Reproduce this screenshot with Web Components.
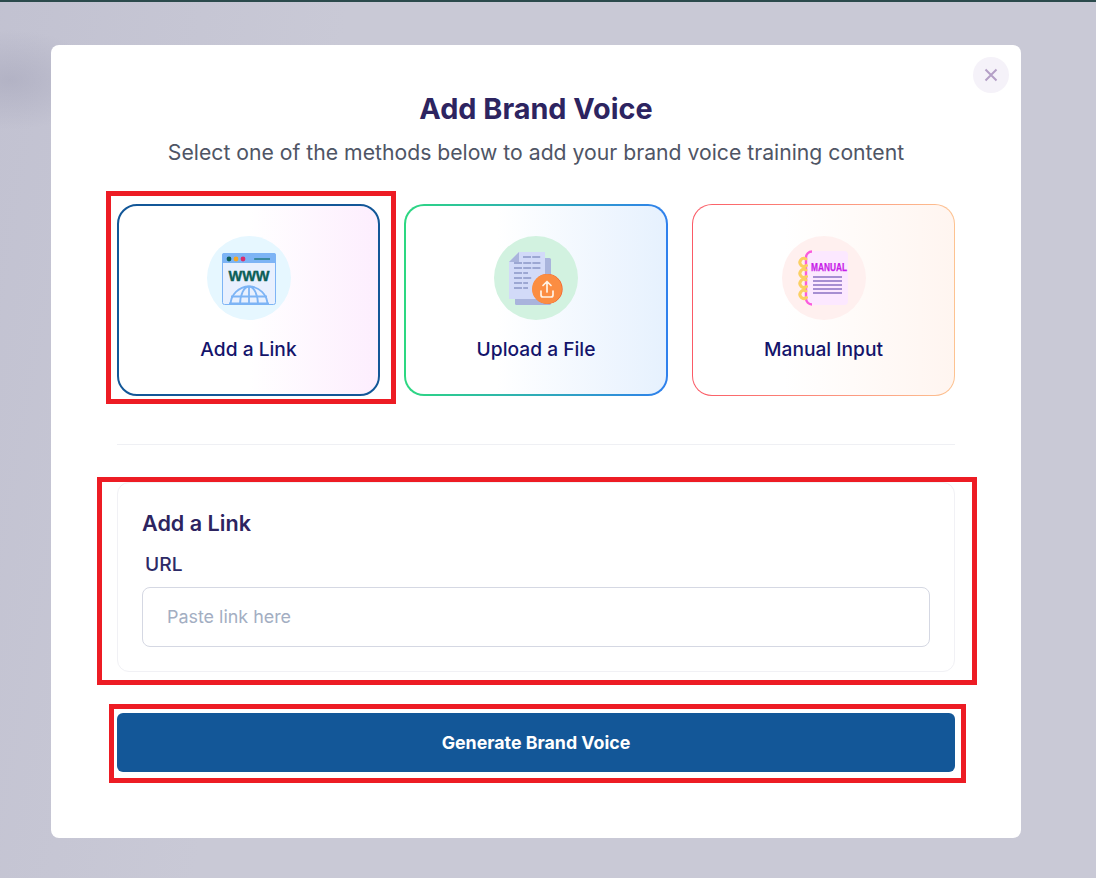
<!DOCTYPE html>
<html>
<head>
<meta charset="utf-8">
<title>Add Brand Voice</title>
<style>
  html, body { margin: 0; height: 100%; }
  body {
    height: 878px;
    overflow: hidden;
    font-family: Inter, "Liberation Sans", sans-serif;
    background-color: #c9c9d6;
  }
  svg { display: block; }
</style>
</head>
<body>
<voice-overlay>
  <voice-modal>
    <red-mark style="--t:-13px;--r:-16px;--b:-8px;--l:-11px">
      <method-card label="Add a Link" kind="link">
        <svg slot="icon" width="84" height="84" viewBox="0 0 84 84">
          <defs><clipPath id="win"><rect x="15" y="17" width="54" height="52" rx="2"/></clipPath></defs>
          <circle cx="42" cy="42" r="42" fill="#e6f7ff"/>
          <rect x="15.5" y="17.5" width="53" height="51" rx="2" fill="#e8f0fe" stroke="#7db4f5"/>
          <path d="M15 19a2 2 0 0 1 2-2h50a2 2 0 0 1 2 2v8H15z" fill="#7db4f5"/>
          <circle cx="22" cy="23" r="2.4" fill="#0f5f58"/>
          <circle cx="29" cy="23" r="2.4" fill="#f5a623"/>
          <circle cx="36" cy="23" r="2.4" fill="#d92d6b"/>
          <path d="M47 23h16" stroke="#0f6f66" stroke-width="1.2"/>
          <text x="42" y="44.500" text-anchor="middle" font-family="Liberation Sans" font-weight="700" font-size="14.500" textLength="41" stroke="#0b5e57" stroke-width=".4" fill="#0b5e57">WWW</text>
          <g clip-path="url(#win)" fill="none" stroke="#7db4f5" stroke-width="1.8">
            <circle cx="42" cy="69" r="18.500"/>
            <ellipse cx="42" cy="69" rx="9" ry="18.500"/>
            <path d="M42 50v20M24 60.500h36M22 67.500h40"/>
          </g>
        </svg>
      </method-card>
    </red-mark>
    <method-card label="Upload a File" kind="file">
      <svg slot="icon" width="84" height="84" viewBox="0 0 84 84">
        <circle cx="42" cy="42" r="42" fill="#d2f2e0"/>
        <rect x="21" y="22" width="36" height="47" rx="1.500" fill="#a9b4dc"/>
        <path d="M25 16h26v47H15V26z" fill="#d2daf8"/>
        <path d="M25 16v10H15z" fill="#a9b4dc"/>
        <g stroke="#8b96c6" stroke-width="1.300" stroke-dasharray="8 1.200">
          <path d="M29 21h18"/><path d="M20 27h27"/><path d="M20 32h27"/>
          <path d="M20 37h14"/><path d="M20 42h18"/><path d="M20 47h14"/><path d="M20 52h14"/>
        </g>
        <circle cx="53.600" cy="53" r="15" fill="#f4511e"/>
        <circle cx="53" cy="53" r="15" fill="#fb8d42"/>
        <path d="M53 56v-10M49 49.500L53 45.500l4 4M47 55v4a2 2 0 0 0 2 2h8a2 2 0 0 0 2-2v-4" fill="none" stroke="#fff3e6" stroke-width="1.700" stroke-linecap="round" stroke-linejoin="round"/>
      </svg>
    </method-card>
    <method-card label="Manual Input" kind="manual">
      <svg slot="icon" width="84" height="84" viewBox="0 0 84 84">
        <circle cx="42" cy="42" r="42" fill="#fff0ef"/>
        <path d="M30 15h32a4 4 0 0 1 4 4v46a4 4 0 0 1-4 4H30a6 6 0 0 1-6-6V21a6 6 0 0 1 6-6z" fill="#fce8ff"/>
        <path d="M30 15.500a6 6 0 0 0-6 6v41a6 6 0 0 0 6 6" fill="none" stroke="#fb5bdc" stroke-width="2.400"/>
        <g fill="none" stroke="#fbd063" stroke-width="3" stroke-linecap="round">
          <path d="M24 23a4 4 0 1 0 .5 6.500"/>
          <path d="M24 34a4 4 0 1 0 .5 6.500"/>
          <path d="M24 44a4 4 0 1 0 .5 6.500"/>
          <path d="M24 55a4 4 0 1 0 .5 6.500"/>
        </g>
        <text x="47" y="35" text-anchor="middle" font-family="Liberation Sans" font-weight="700" font-size="10" textLength="36" lengthAdjust="spacingAndGlyphs" stroke="#c81ee8" stroke-width=".25" fill="#c81ee8">MANUAL</text>
        <path d="M31 41h29M31 45h29M31 49h29M31 53h29M31 57h29" stroke="#8a70c4" stroke-width="1.300"/>
      </svg>
    </method-card>
  </voice-modal>
</voice-overlay>

<template id="overlay-tpl">
  <style>
    :host {
      display: block;
      height: 878px;
      box-sizing: border-box;
      border-top: 2px solid #2b4a4c;
      padding: 43px 75px 40px 51px;
      background:
        radial-gradient(90px 50px at 10px 78px, rgba(168,168,188,.6), rgba(168,168,188,0)),
        linear-gradient(100deg, rgba(185,185,203,.45), rgba(201,201,214,0) 28%),
        #c9c9d6;
    }
  </style>
  <slot></slot>
</template>

<template id="modal-tpl">
  <style>
    :host {
      display: block;
      position: relative;
      height: 793px;
      box-sizing: border-box;
      padding: 47px 66px 0;
      background: #fff;
      border-radius: 8px;
    }
    .close {
      position: absolute;
      top: 12px;
      right: 12px;
      width: 36px;
      height: 36px;
      display: flex;
      align-items: center;
      justify-content: center;
      border-radius: 50%;
      background: #f5f2f9;
    }
    h1 {
      margin: 0;
      text-align: center;
      font-size: 28.800px;
      line-height: 34px;
      font-weight: 700;
      color: #2d2460;
    }
    p {
      margin: 14px 0 0;
      text-align: center;
      font-size: 21.200px;
      line-height: 24px;
      color: #4f5565;
    }
    .methods {
      display: grid;
      grid-template-columns: 263px 264px 263px;
      gap: 24px;
      margin-top: 40px;
      height: 192px;
    }
    hr {
      height: 1px;
      border: 0;
      margin: 48px 0 0;
      background: #eff0f4;
    }
  </style>
  <div class="close">
    <svg width="14" height="14" viewBox="0 0 14 14"><path d="M1.500 1.500l11 11M12.500 1.500l-11 11" stroke="#b49fc6" stroke-width="2"/></svg>
  </div>
  <h1>Add Brand Voice</h1>
  <p>Select one of the methods below to add your brand voice training content</p>
  <div class="methods"><slot></slot></div>
  <hr>
  <red-mark style="--t:-5px;--r:-22px;--b:-13px;--l:-20px;margin-top:37px">
    <link-panel></link-panel>
  </red-mark>
  <red-mark style="--t:-9px;--r:-11px;--b:-11px;--l:-8px;margin-top:41px">
    <primary-button>Generate Brand Voice</primary-button>
  </red-mark>
</template>

<template id="mark-tpl">
  <style>
    :host { display: block; position: relative; }
    .box {
      position: absolute;
      top: var(--t);
      right: var(--r);
      bottom: var(--b);
      left: var(--l);
      border: 5px solid #ed1c24;
      pointer-events: none;
    }
  </style>
  <slot></slot>
  <div class="box"></div>
</template>

<template id="card-tpl">
  <style>
    :host {
      display: flex;
      flex-direction: column;
      align-items: center;
      height: 192px;
      box-sizing: border-box;
      padding-top: 30px;
      border: 2px solid transparent;
      border-radius: 20px;
      font-size: 19.200px;
      line-height: 22px;
      font-weight: 500;
      color: #14146b;
    }
    :host([kind="link"]) {
      border-color: #135798;
      background: linear-gradient(90deg, #fff 50%, #fdeefe) padding-box;
    }
    :host([kind="file"]) {
      background:
        linear-gradient(90deg, #fff 35%, #e6f1fe) padding-box,
        linear-gradient(90deg, #2dd881, #2f80ed) border-box;
    }
    :host([kind="manual"]) {
      border-width: 1px;
      padding-top: 31px;
      background:
        linear-gradient(90deg, #fff 35%, #fff5f0) padding-box,
        linear-gradient(90deg, #fb5a66, #fdc391) border-box;
    }
    .label { margin-top: 18px; }
  </style>
  <slot name="icon"></slot>
  <div class="label"></div>
</template>

<template id="panel-tpl">
  <style>
    :host {
      display: block;
      height: 190px;
      box-sizing: border-box;
      padding: 28px 24px 0;
      border: 1px solid #f1f1f5;
      border-radius: 12px;
    }
    h2 {
      margin: 0;
      font-size: 21.600px;
      line-height: 24px;
      font-weight: 600;
      color: #2d2460;
    }
    label {
      display: block;
      margin: 18px 0 0 3px;
      font-size: 19.200px;
      line-height: 22px;
      font-weight: 500;
      color: #2d2a66;
    }
    input {
      display: block;
      width: 100%;
      height: 60px;
      box-sizing: border-box;
      margin-top: 12px;
      padding: 0 24px 2px;
      border: 1px solid #d5d8e3;
      border-radius: 8px;
      outline: 0;
      font: 400 17.900px Inter, "Liberation Sans", sans-serif;
      background: #fff;
    }
    input::placeholder { color: #a3aec2; opacity: 1; }
  </style>
  <h2>Add a Link</h2>
  <label for="url">URL</label>
  <input id="url" type="text" placeholder="Paste link here">
</template>

<template id="button-tpl">
  <style>
    :host {
      display: flex;
      align-items: center;
      justify-content: center;
      height: 59px;
      border-radius: 6px;
      background: #135798;
      color: #fff;
      font-size: 17.800px;
      font-weight: 700;
    }
  </style>
  <slot></slot>
</template>

<script>
  // every element here just stamps its template into an open shadow root
  const stamp = (el, id) => {
    el.attachShadow({ mode: 'open' });
    el.shadowRoot.appendChild(document.getElementById(id).content.cloneNode(true));
  };

  class VoiceOverlay extends HTMLElement {
    constructor() { super(); stamp(this, 'overlay-tpl'); }
  }
  class VoiceModal extends HTMLElement {
    constructor() { super(); stamp(this, 'modal-tpl'); }
  }
  class RedMark extends HTMLElement {
    constructor() { super(); stamp(this, 'mark-tpl'); }
  }
  class MethodCard extends HTMLElement {
    constructor() { super(); stamp(this, 'card-tpl'); }
    connectedCallback() {
      this.shadowRoot.querySelector('.label').textContent = this.getAttribute('label');
    }
  }
  class LinkPanel extends HTMLElement {
    constructor() { super(); stamp(this, 'panel-tpl'); }
  }
  class PrimaryButton extends HTMLElement {
    constructor() { super(); stamp(this, 'button-tpl'); }
  }

  customElements.define('voice-overlay', VoiceOverlay);
  customElements.define('red-mark', RedMark);
  customElements.define('method-card', MethodCard);
  customElements.define('link-panel', LinkPanel);
  customElements.define('primary-button', PrimaryButton);
  customElements.define('voice-modal', VoiceModal);
</script>
</body>
</html>
